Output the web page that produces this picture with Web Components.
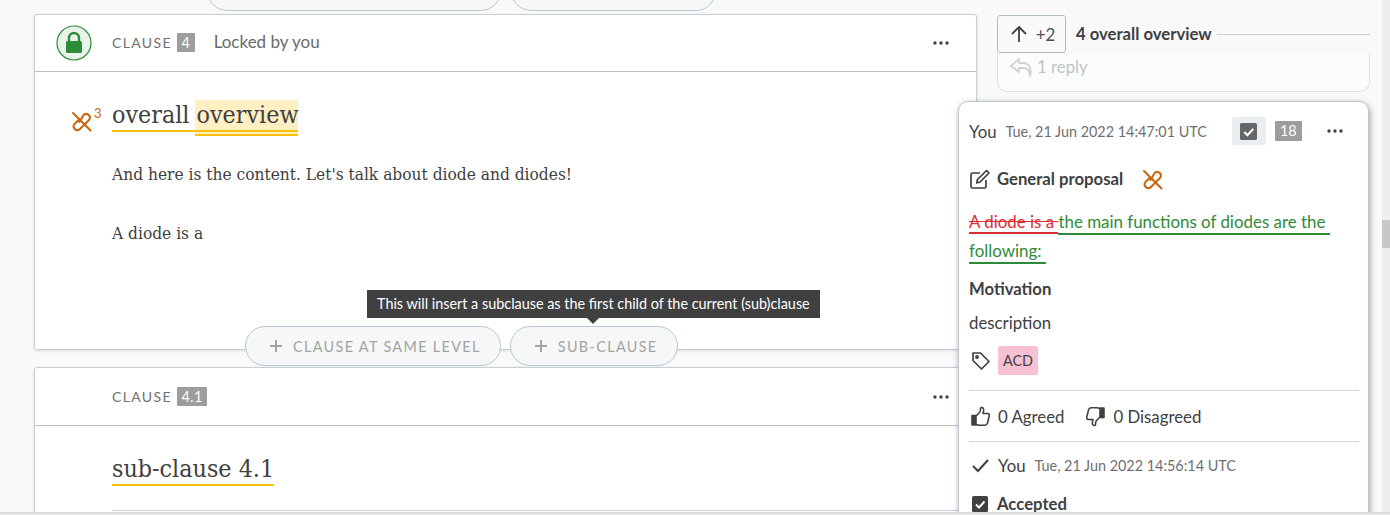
<!DOCTYPE html>
<html>
<head>
<meta charset="utf-8">
<style>
  html, body { margin: 0; height: 100%; overflow: hidden; }
  body { background: #f9f9f9; font-family: Lato, "Liberation Sans", sans-serif; color: #404040; }
</style>
</head>
<body>
<clause-page></clause-page>

<template id="clause-card-tpl">
  <style>
    :host { display: block; }
    #card {
      background: #fff;
      border: 1px solid #c9ced2;
      border-radius: 3px;
      box-shadow: 0 1px 3px rgba(0,0,0,.12);
      height: 100%;
      box-sizing: border-box;
    }
    #head {
      display: flex;
      align-items: center;
      height: var(--head-h, 57px);
      box-sizing: border-box;
      border-bottom: 1px solid #b8c0c6;
    }
    #lock { width: 77px; padding-left: 21px; box-sizing: border-box; display: flex; }
    #label { font-size: 14px; letter-spacing: 1.35px; color: #6f6f6f; margin-top: var(--label-top, -2px); }
    #num {
      background: #9d9d9d; color: #fff; font-size: 14.4px; border-radius: 1px;
      padding: 0 4.5px; line-height: 19px; margin-left: 5px; letter-spacing: .4px; margin-top: var(--label-top, -2px);
    }
    #note { font-size: 17px; color: #6a6a6a; margin-left: 19px; margin-top: -4px; }
    #more { margin-left: auto; margin-right: 27px; display: flex; }
    #body { padding: 0 0 0 77px; }
  </style>
  <div id="card">
    <div id="head">
      <div id="lock"><slot name="lock"></slot></div>
      <span id="label">CLAUSE</span><span id="num"></span><span id="note"></span>
      <span id="more"><svg width="16" height="4" viewBox="0 0 16 4"><circle cx="2" cy="2" r="1.7" fill="#404040"/><circle cx="8" cy="2" r="1.7" fill="#404040"/><circle cx="14" cy="2" r="1.7" fill="#404040"/></svg></span>
    </div>
    <div id="body"><slot></slot></div>
  </div>
</template>

<template id="pill-tpl">
  <style>
    :host {
      display: inline-flex; align-items: center; box-sizing: border-box; height: 40px;
      border: 1px solid #b8c8d0; border-radius: 20px; background: #f6f8f8;
      color: #a3a3a3; font-size: 14.4px; letter-spacing: 1.35px; padding: 0 19px 0 23px; white-space: nowrap;
    }
    svg { margin-right: 10px; }
  </style>
  <svg width="14" height="14" viewBox="0 0 14 14"><path d="M7 1v12M1 7h12" stroke="#a3a3a3" stroke-width="2" fill="none"/></svg><slot></slot>
</template>

<template id="clause-page-tpl">
  <style>
    :host { display: block; width: 1390px; height: 515px; position: relative; overflow: hidden; }
    #main { display: flex; height: 100%; }
    #left { width: 943px; margin: -1px 34px 0 34px; flex: none; display: flex; flex-direction: column; padding-top: 15px; box-sizing: border-box; position: relative; }
    #topPills { position: absolute; top: -28px; left: 173px; display: flex; gap: 10px; }
    #topPills clause-pill:first-child { width: 294px; }
    #topPills clause-pill:last-child { width: 205px; }
    .c1 { height: 336px; flex: none; }
    .c2 { height: 200px; flex: none; margin-top: 17px; --head-h: 58px; --label-top: 0px; }
    #pills { position: absolute; top: 327px; left: 211px; display: flex; gap: 9px; }
    #tip {
      position: absolute; left: 333px; top: 291px; background: #404040; color: #fff; font-size: 14.4px;
      height: 28px; line-height: 28px; padding: 0 10px; white-space: nowrap; z-index: 3;
    }
    #tip::after {
      content: ""; position: absolute; left: 50%; margin-left: -6px; top: 100%;
      border: 6px solid transparent; border-top-color: #404040; border-bottom: 0;
    }
    h2 { font: 400 24.8px "DejaVu Serif", serif; font-stretch: condensed; color: #404040; margin: 0; display: inline-block; line-height: 30px; border-bottom: 2px solid #ffc107; position: relative; white-space: nowrap; }
    #hl { background: #fff0c4; display: inline-block; position: relative; margin-left: -2px; padding-left: 2px; }
    #hl::after { content: ""; position: absolute; left: 0; right: 0; top: 100%; height: 6px; background: linear-gradient(#ffc107 2px, #fff0c4 2px, #fff0c4 4px, #ffc107 4px); }
    #title { margin-top: 28px; display: flex; position: relative; }
    #link { position: absolute; left: -41px; top: 11px; display: flex; }
    #link sup { color: #c8640a; font-size: 13px; line-height: 13px; margin: -4px 0 0 2px; }
    p { font: 17.2px/24px "DejaVu Serif", serif; font-stretch: condensed; color: #404040; margin: 0; }
    #field { margin-top: 24px; border-top: 1px solid #c9ced2; height: 10px; background: #fff; }
    #side { position: relative; flex: 1; }
    #scroll { position: absolute; right: 0; top: 0; bottom: 0; width: 8px; background: #eee; }
    #thumb { position: absolute; top: 220px; left: 0; right: 0; height: 28px; background: #c8c8c8; }
    #bottomBar { position: absolute; left: 0; right: 0; bottom: 0; height: 3px; background: linear-gradient(#d4d4d4, #efefef); z-index: 6; }
  </style>
  <div id="main">
    <div id="left">
      <div id="topPills"><clause-pill></clause-pill><clause-pill></clause-pill></div>
      <clause-card class="c1" num="4" note="Locked by you">
        <svg slot="lock" width="36" height="36" viewBox="0 0 36 36"><circle cx="18" cy="18" r="17" fill="#e9f3ec" stroke="#2e8b3a" stroke-width="1.2"/><rect x="10" y="16" width="16" height="12" rx="1.5" fill="#2e8b3a"/><path d="M13 16v-3a5 5 0 0 1 10 0v3" fill="none" stroke="#2e8b3a" stroke-width="2.4"/></svg>
        <div id="title">
          <span id="link"><link-icon></link-icon><sup>3</sup></span>
          <h2>overall <span id="hl">overview</span></h2>
        </div>
        <p style="margin-top:30px">And here is the content. Let's talk about diode and diodes!</p>
        <p style="margin-top:35px">A diode is a</p>
      </clause-card>
      <div id="pills">
        <clause-pill>CLAUSE AT SAME LEVEL</clause-pill>
        <clause-pill>SUB-CLAUSE</clause-pill>
      </div>
      <div id="tip">This will insert a subclause as the first child of the current (sub)clause</div>
      <clause-card class="c2" num="4.1">
        <div style="margin-top:28px"><h2>sub-clause 4.1</h2></div>
        <div id="field"></div>
      </clause-card>
    </div>
    <div id="side">
      <side-thread></side-thread>
      <div id="scroll"><div id="thumb"></div></div>
    </div>
  </div>
  <div id="bottomBar"></div>
</template>

<template id="link-icon-tpl">
  <style>:host { display: inline-flex; } svg { display: block; }</style>
  <svg width="21" height="21" viewBox="0 0 21 21" fill="none" stroke="#c8640a" stroke-width="2" stroke-linecap="round" stroke-linejoin="round">
    <path d="M2 2 L19.500 19.500"/>
    <path d="M8 8.500 L3.500 13 a3.700 3.700 0 0 0 5.200 5.200 L18 9 a3.700 3.700 0 0 0 -5.200 -5.200 L8.500 11"/>
  </svg>
</template>

<template id="thumb-icon-tpl">
  <style>:host { display: inline-flex; } svg { display: block; }</style>
  <svg width="20" height="21" viewBox="0 0 20 21" fill="none" stroke="#404040" stroke-width="1.6" stroke-linejoin="round">
    <rect x="1" y="9.500" width="4" height="9.500" fill="#404040"/>
    <path d="M5 10l3.500-3.500c1-1.200 1-2.500 1-4 0-1.500 3.200-1.500 3.200 1.500 0 1.500-.7 3-.7 3.500h4.500c1.500 0 2 1.200 1.700 2.500l-1.700 7c-.4 1.500-1.200 2.200-2.600 2.200H8c-1.500 0-3-1-3-1.200"/>
  </svg>
</template>

<template id="side-thread-tpl">
  <style>
    :host { display: block; }
    #jump { position: absolute; left: -14px; top: 15px; display: flex; align-items: center; right: 20px; z-index: 1; }
    #up { width: 69px; height: 38px; box-sizing: border-box; border: 1px solid #b0bcc4; border-radius: 3px; background: #fafafa; display: flex; align-items: center; justify-content: center; gap: 8px; font-size: 17px; color: #505050; padding-left: 2px; }
    #jump b { margin-left: 10px; font-size: 16.7px; font-weight: 700; white-space: nowrap; }
    #jump i { flex: 1; height: 1px; background: #ccd0d3; margin-left: 5px; }
    #reply { position: absolute; left: -14px; top: 53px; right: 20px; height: 39px; box-sizing: border-box; border: 1px solid #dde3e6; border-top: 0; border-radius: 0 0 10px 10px; background: #fbfdfd; display: flex; align-items: flex-start; padding: 3px 0 0 11px; gap: 4px; color: #bfc3c6; font-size: 16.8px; }
    #panel {
      position: absolute; left: -53px; top: 101px; width: 411px; height: 430px; box-sizing: border-box;
      background: #fff; border: 1px solid #bcc8cf; border-radius: 10px; box-shadow: 1px 2px 6px rgba(0,0,0,.35);
      padding: 0 9px 0 10px; z-index: 5;
    }
    .row { display: flex; align-items: center; }
    #h1 { height: 58px; }
    .you { font-size: 16.8px; color: #404040; }
    .date { font-size: 14.4px; color: #6f6f6f; margin-left: 9px; }
    #chk { margin-left: 25px; width: 34px; height: 28px; background: #e9eef1; border-radius: 2px; display: flex; align-items: center; justify-content: center; }
    #n18 { margin-left: 9px; background: #9d9d9d; color: #fff; font-size: 14.4px; padding: 0 5px; line-height: 20px; border-radius: 1px; }
    #dots { margin-left: 25px; display: flex; }
    #h2 { font-weight: 700; font-size: 16.7px; height: 26px; margin-top: 6px; }
    #h2 svg:first-child { margin-right: 6px; }
    #h2 link-icon { margin-left: 19px; }
    #diff { font-size: 16.9px; line-height: 29px; margin-top: 15px; }
    del { color: #dc2f35; border-bottom: 2px solid #dc2f35; }
    ins { color: #2e8b3a; text-decoration: none; border-bottom: 2px solid #2e8b3a; padding-bottom: 1px; }
    #mot { font-weight: 700; font-size: 16.7px; margin-top: 14px; line-height: 20px; }
    #desc { font-size: 16.8px; margin-top: 14px; line-height: 20px; }
    #tags { margin-top: 13px; display: flex; align-items: center; gap: 7px; padding-left: 2px; }
    #acd { background: #f8c0d4; font-size: 14.4px; line-height: 29px; padding: 0 5px; border-radius: 2px; }
    hr { border: 0; border-top: 1px solid #d5d8da; margin: 0; }
    #votes { height: 50px; box-sizing: border-box; font-size: 16.8px; }
    #votes thumb-icon { margin: 0 7px 0 2px; }
    #votes span { margin-right: 21px; }
    #votes .down { transform: scale(-1, -1); margin: 0 8px 0 0; }
    #done { height: 46px; }
    #acc { font-weight: 700; font-size: 16.7px; gap: 9px; padding-left: 3px; margin-top: 6px; }
  </style>
  <div id="jump">
    <div id="up">
      <svg width="18" height="18" viewBox="0 0 18 18" fill="none" stroke="#404040" stroke-width="1.8"><path d="M9 17V2M2 9l7-7 7 7"/></svg>
      <span>+2</span>
    </div>
    <b>4 overall overview</b><i></i>
  </div>
  <div id="reply">
    <svg width="24" height="22" viewBox="0 0 24 22" fill="none" stroke="#cfd3d6" stroke-width="1.8" stroke-linejoin="round"><path d="M10 3 L2 10 L10 16 V12 H14 C18 12 21 14 21 20 C23 14 21 7 14 7 H10 Z"/></svg>
    <span>1 reply</span>
  </div>
  <div id="panel">
    <div id="h1" class="row">
      <span class="you">You</span><span class="date">Tue, 21 Jun 2022 14:47:01 UTC</span>
      <span id="chk"><check-box size="17" color="#666"></check-box></span>
      <span id="n18">18</span>
      <span id="dots"><svg width="16" height="4" viewBox="0 0 16 4"><circle cx="2" cy="2" r="1.7" fill="#404040"/><circle cx="8" cy="2" r="1.7" fill="#404040"/><circle cx="14" cy="2" r="1.7" fill="#404040"/></svg></span>
    </div>
    <div id="h2" class="row">
      <svg width="22" height="22" viewBox="0 0 22 22" fill="none" stroke="#404040" stroke-width="1.7"><path d="M17 12v6.500a1.500 1.500 0 0 1-1.500 1.500h-12A1.500 1.500 0 0 1 2 18.500v-12A1.500 1.500 0 0 1 3.500 5H11"/><path d="M8.500 11.500 17.500 2.500l2.500 2.500-9 9-3.300.8z" stroke-linejoin="round"/></svg>
      <span>General proposal</span>
      <link-icon></link-icon>
    </div>
    <div id="diff"><del>A diode is a </del><ins>the main functions of diodes are the&nbsp;<br>following:&nbsp;</ins></div>
    <div id="mot">Motivation</div>
    <div id="desc">description</div>
    <div id="tags">
      <svg width="20" height="20" viewBox="0 0 20 20" fill="none" stroke="#404040" stroke-width="1.7" stroke-linejoin="round"><path d="M2 2h7.500l8.500 8.500-7.500 7.500L2 9.500z"/><circle cx="6" cy="6" r="1.100"/></svg>
      <span id="acd">ACD</span>
    </div>
    <hr style="margin-top:15px">
    <div id="votes" class="row">
      <thumb-icon></thumb-icon>
      <span>0 Agreed</span>
      <thumb-icon class="down"></thumb-icon>
      <span>0 Disagreed</span>
    </div>
    <hr>
    <div id="done" class="row">
      <svg width="20" height="16" viewBox="0 0 20 16" fill="none" stroke="#404040" stroke-width="2" style="margin:0 7px 0 2px"><path d="M2 9l5 5L17 3"/></svg>
      <span class="you">You</span><span class="date">Tue, 21 Jun 2022 14:56:14 UTC</span>
    </div>
    <div id="acc" class="row"><check-box size="16"></check-box><span>Accepted</span></div>
  </div>
</template>

<script>
  function mount(el, id) {
    const root = el.attachShadow({ mode: 'open' });
    root.appendChild(document.getElementById(id).content.cloneNode(true));
    return root;
  }

  class ClausePill extends HTMLElement {
    constructor() { super(); mount(this, 'pill-tpl'); }
  }
  customElements.define('clause-pill', ClausePill);

  class LinkIcon extends HTMLElement {
    constructor() { super(); mount(this, 'link-icon-tpl'); }
  }
  customElements.define('link-icon', LinkIcon);

  class ThumbIcon extends HTMLElement {
    constructor() { super(); mount(this, 'thumb-icon-tpl'); }
  }
  customElements.define('thumb-icon', ThumbIcon);

  class CheckBox extends HTMLElement {
    connectedCallback() {
      if (this.shadowRoot) return;
      const s = this.getAttribute('size') || 16;
      const c = this.getAttribute('color') || '#404040';
      this.attachShadow({ mode: 'open' }).innerHTML = `
        <style>:host { display: inline-flex; } svg { display: block; }</style>
        <svg width="${s}" height="${s}" viewBox="0 0 16 16"><rect width="16" height="16" rx="1.500" fill="${c}"/><path d="M4 8.500l3 3 5.500-6" fill="none" stroke="#fff" stroke-width="2"/></svg>`;
    }
  }
  customElements.define('check-box', CheckBox);

  class ClauseCard extends HTMLElement {
    connectedCallback() {
      if (this.shadowRoot) return;
      const root = mount(this, 'clause-card-tpl');
      root.getElementById('num').textContent = this.getAttribute('num');
      root.getElementById('note').textContent = this.getAttribute('note') || '';
    }
  }
  customElements.define('clause-card', ClauseCard);

  class SideThread extends HTMLElement {
    constructor() { super(); mount(this, 'side-thread-tpl'); }
  }
  customElements.define('side-thread', SideThread);

  class ClausePage extends HTMLElement {
    constructor() { super(); mount(this, 'clause-page-tpl'); }
  }
  customElements.define('clause-page', ClausePage);
</script>
</body>
</html>
